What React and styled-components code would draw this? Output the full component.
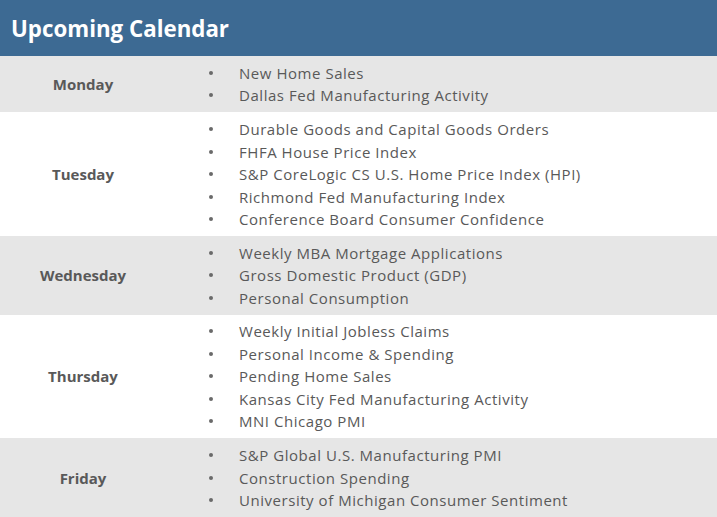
import React from "react";
import styled, { createGlobalStyle } from "styled-components";

const Global = createGlobalStyle`
  html, body { margin: 0; padding: 0; background: #ffffff; }
  body { font-family: "Open Sans", "Liberation Sans", sans-serif; }
`;

const Page = styled.div`
  width: 717px;
  height: 517px;
  overflow: hidden;
  display: flex;
  flex-direction: column;
`;

const Header = styled.header`
  height: 56px;
  flex: none;
  background: #3d6a93;
  display: flex;
  align-items: center;
  padding: 0 0 0 11px;
  box-sizing: border-box;
`;

const Title = styled.h1`
  margin: 0;
  color: #ffffff;
  font-family: "Open Sans", "Liberation Sans", sans-serif;
  font-weight: 700;
  font-size: 22.3px;
  letter-spacing: 0;
`;

const Row = styled.section`
  display: grid;
  grid-template-columns: 166px 1fr;
  align-items: center;
  background: ${(p) => (p.$shade ? "#e6e6e6" : "#ffffff")};
  padding: 5.6px 0;
`;

const Day = styled.div`
  text-align: center;
  font-weight: 700;
  font-size: 15px;
  color: #595959;
`;

const List = styled.ul`
  margin: 0;
  padding: 0;
  list-style: none;
`;

const Item = styled.li`
  display: flex;
  align-items: center;
  height: 22.5px;
  font-size: 15px;
  color: #595959;
  letter-spacing: 0.54px;
  white-space: nowrap;
`;

const Bullet = styled.span`
  width: 73px;
  padding-left: 43px;
  box-sizing: border-box;
  flex: none;
  display: flex;
  align-items: center;

  &::before {
    content: "";
    width: 4px;
    height: 4px;
    border-radius: 50%;
    background: #6a6a6a;
  }
`;

const data = [
  ["Monday", ["New Home Sales", "Dallas Fed Manufacturing Activity"]],
  [
    "Tuesday",
    [
      "Durable Goods and Capital Goods Orders",
      "FHFA House Price Index",
      "S&P CoreLogic CS U.S. Home Price Index (HPI)",
      "Richmond Fed Manufacturing Index",
      "Conference Board Consumer Confidence",
    ],
  ],
  [
    "Wednesday",
    ["Weekly MBA Mortgage Applications", "Gross Domestic Product (GDP)", "Personal Consumption"],
  ],
  [
    "Thursday",
    [
      "Weekly Initial Jobless Claims",
      "Personal Income & Spending",
      "Pending Home Sales",
      "Kansas City Fed Manufacturing Activity",
      "MNI Chicago PMI",
    ],
  ],
  [
    "Friday",
    [
      "S&P Global U.S. Manufacturing PMI",
      "Construction Spending",
      "University of Michigan Consumer Sentiment",
    ],
  ],
];

export default function App() {
  return (
    <Page>
      <Global />
      <Header>
        <Title>Upcoming Calendar</Title>
      </Header>
      {data.map(([day, items], i) => (
        <Row key={day} $shade={i % 2 === 0}>
          <Day>{day}</Day>
          <List>
            {items.map((t) => (
              <Item key={t}>
                <Bullet />
                {t}
              </Item>
            ))}
          </List>
        </Row>
      ))}
    </Page>
  );
}
